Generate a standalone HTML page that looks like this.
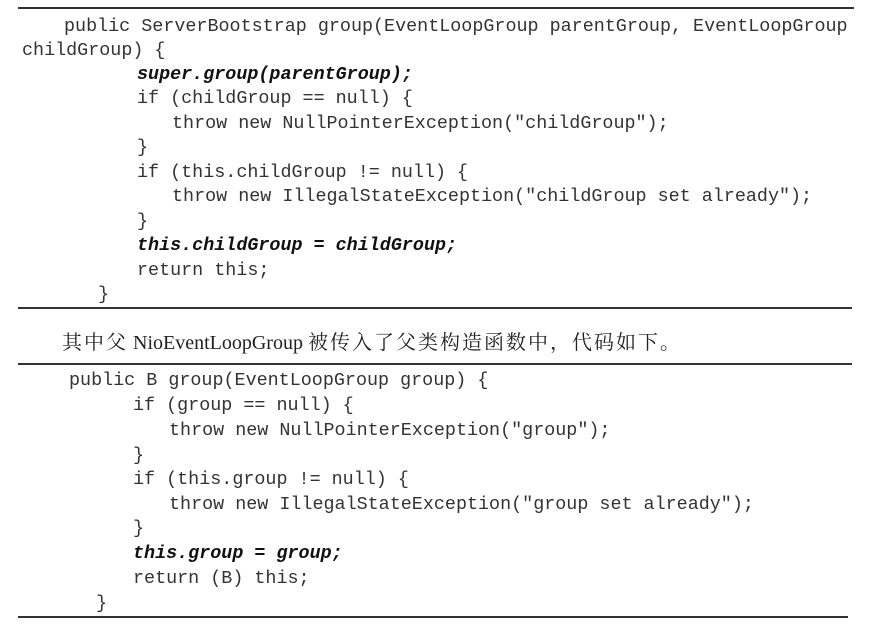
<!DOCTYPE html>
<html><head><meta charset="utf-8"><style>
body{margin:0;width:878px;height:631px;background:#fff;position:relative;overflow:hidden}
.r{position:absolute;height:2px;background:#333}
.c{position:absolute;font-family:"Liberation Mono",monospace;font-size:18.4px;line-height:24px;color:#333;white-space:pre}
.b{font-weight:bold;font-style:italic;color:#111}
.t{position:absolute;left:62px;top:326px;font-family:"Liberation Serif","Noto Serif CJK SC",serif;font-size:20px;color:#222;white-space:pre}
.k{letter-spacing:2px}
</style></head><body>
<div class="r" style="left:18px;top:7px;width:836px"></div>
<div class="c" style="left:64px;top:15px">public ServerBootstrap group(EventLoopGroup parentGroup, EventLoopGroup</div>
<div class="c" style="left:22px;top:39px">childGroup) {</div>
<div class="c b" style="left:137px;top:63px">super.group(parentGroup);</div>
<div class="c" style="left:137px;top:87px">if (childGroup == null) {</div>
<div class="c" style="left:172px;top:112px">throw new NullPointerException("childGroup");</div>
<div class="c" style="left:137px;top:136px">}</div>
<div class="c" style="left:137px;top:161px">if (this.childGroup != null) {</div>
<div class="c" style="left:172px;top:185px">throw new IllegalStateException("childGroup set already");</div>
<div class="c" style="left:137px;top:210px">}</div>
<div class="c b" style="left:137px;top:234px">this.childGroup = childGroup;</div>
<div class="c" style="left:137px;top:259px">return this;</div>
<div class="c" style="left:98px;top:283px">}</div>
<div class="r" style="left:18px;top:307px;width:834px"></div>
<div class="t"><span class="k">其中父</span> NioEventLoopGroup <span class="k">被传入了父类构造函数中，代码如下。</span></div>
<div class="r" style="left:18px;top:363px;width:834px"></div>
<div class="c" style="left:69px;top:369px">public B group(EventLoopGroup group) {</div>
<div class="c" style="left:133px;top:394px">if (group == null) {</div>
<div class="c" style="left:169px;top:419px">throw new NullPointerException("group");</div>
<div class="c" style="left:133px;top:444px">}</div>
<div class="c" style="left:133px;top:468px">if (this.group != null) {</div>
<div class="c" style="left:169px;top:493px">throw new IllegalStateException("group set already");</div>
<div class="c" style="left:133px;top:517px">}</div>
<div class="c b" style="left:133px;top:542px">this.group = group;</div>
<div class="c" style="left:133px;top:567px">return (B) this;</div>
<div class="c" style="left:96px;top:592px">}</div>
<div class="r" style="left:18px;top:616px;width:830px"></div>
</body></html>
